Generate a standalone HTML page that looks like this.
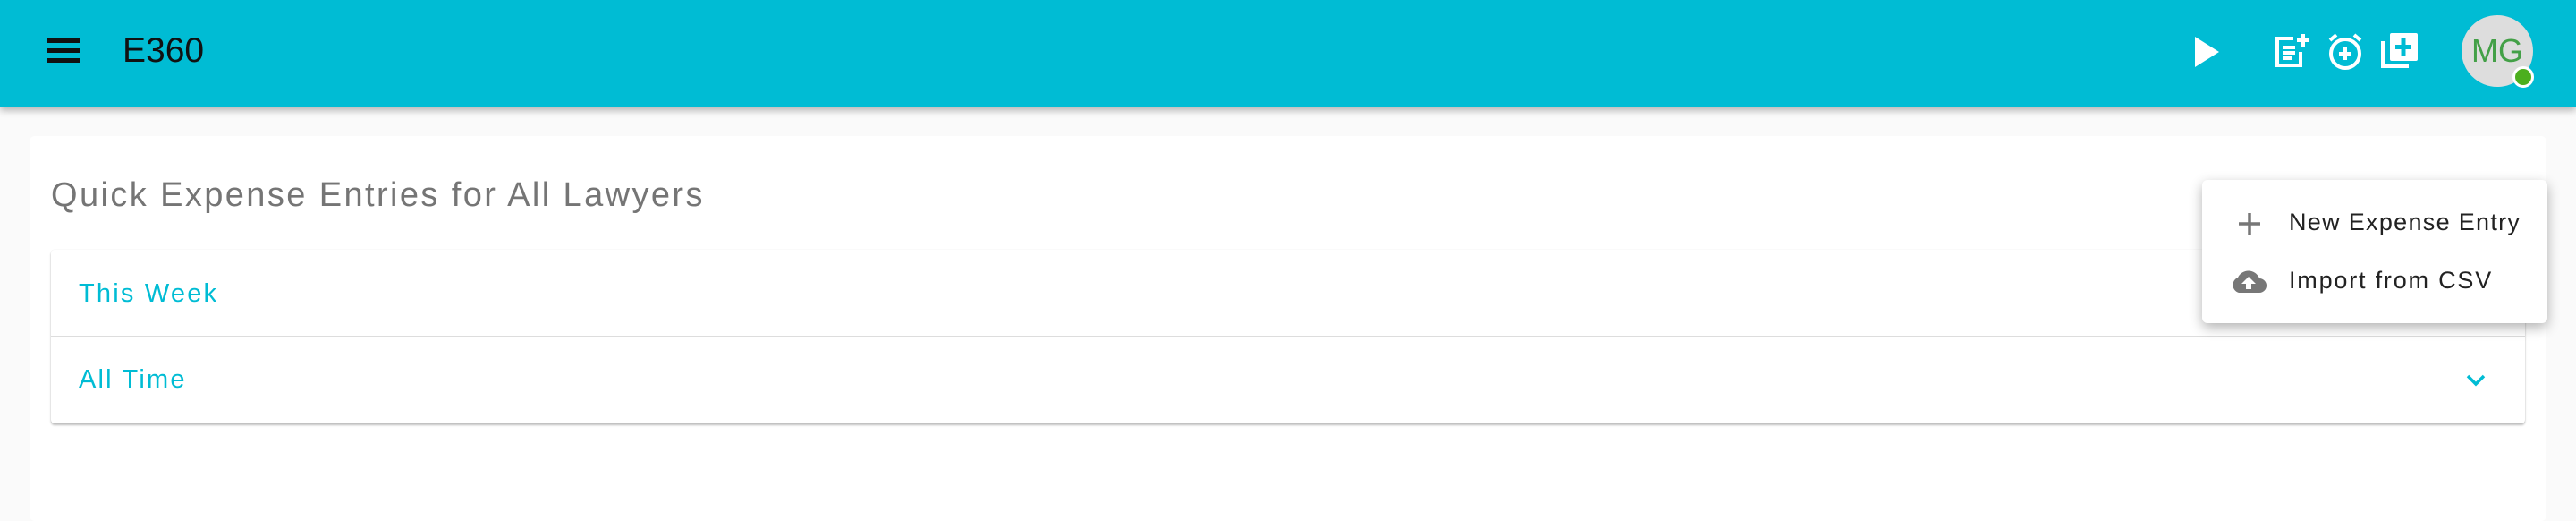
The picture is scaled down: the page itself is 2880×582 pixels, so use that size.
<!DOCTYPE html>
<html><head><style>
*{margin:0;padding:0;box-sizing:border-box}
body{width:2880px;height:575px;background:#fafafa;font-family:"Liberation Sans",sans-serif;position:relative;overflow:hidden}
.hdr{position:absolute;left:0;top:0;width:2880px;height:120px;background:#00bcd4;box-shadow:0 3px 8px rgba(0,0,0,.3);z-index:2}
.abs{position:absolute}
.card{position:absolute;left:33px;top:152px;width:2814px;height:430px;background:#fff;border-radius:6px}
.panel{position:absolute;left:57px;top:279px;width:2766px;height:194px;background:#fff;border-radius:4px;box-shadow:0 2px 2px rgba(0,0,0,.25),0 0 1px rgba(0,0,0,.12)}
.row{position:absolute;left:31px;font-size:29px;color:#00bcd4;letter-spacing:2.2px}
.menu{position:absolute;left:2462px;top:201px;width:386px;height:160px;background:#fff;border-radius:6px;box-shadow:0 5px 14px rgba(0,0,0,.3);z-index:3}
.mi{position:absolute;left:97px;font-size:27px;color:#222;letter-spacing:1.3px}
</style></head><body>
<div class="hdr">
 <svg class="abs" style="left:53px;top:43px" width="36" height="28"><rect x="0" y="0" width="36" height="5" fill="#111"/><rect x="0" y="11" width="36" height="5" fill="#111"/><rect x="0" y="22" width="36" height="5" fill="#111"/></svg>
 <div class="abs" style="left:137px;top:35px;font-size:39px;color:#111">E360</div>
 <svg class="abs" style="left:2453px;top:40px" width="30" height="36"><path d="M1 1 L28 18 L1 35Z" fill="#fff"/></svg>
 <svg class="abs" style="left:2542px;top:36px" width="42" height="42" fill="none" stroke="#fff" stroke-width="4"><path d="M22 7 H4 V37 H30 V22"/><path d="M10 17H24M10 23H24M10 29H20"/><path d="M33 2V16M26 9H40"/></svg>
 <svg class="abs" style="left:2601px;top:36px" width="44" height="44" fill="none" stroke="#fff" stroke-width="4"><circle cx="21" cy="24" r="16"/><path d="M21 17V31M14 24H28"/><path d="M4 9L11 3M38 9L31 3"/></svg>
 <svg class="abs" style="left:2661px;top:36px" width="44" height="42"><path d="M3 10V38H32" fill="none" stroke="#fff" stroke-width="4"/><rect x="11" y="1" width="31" height="31" rx="2" fill="#fff"/><path d="M26 7V26M17 16.5H35" stroke="#00bcd4" stroke-width="5"/></svg>
 <div class="abs" style="left:2752px;top:17px;width:80px;height:80px;border-radius:50%;background:#ddd;color:#43a047;font-size:36px;text-align:center;line-height:80px">MG</div>
 <div class="abs" style="left:2809px;top:74px;width:24px;height:24px;border-radius:50%;background:#4caf1e;border:3px solid #fff"></div>
</div>
<div class="card">
 <div class="abs" style="left:24px;top:45px;font-size:38px;color:#757575;letter-spacing:2.4px">Quick Expense Entries for All Lawyers</div>
</div>
<div class="panel">
 <div class="row" style="top:33px">This Week</div>
 <div class="abs" style="left:0;top:96px;width:100%;height:2px;background:#ddd"></div>
 <div class="row" style="top:129px">All Time</div>
 <svg class="abs" style="left:2699px;top:138px" width="24" height="16"><path d="M3 3L12 12L21 3" fill="none" stroke="#00bcd4" stroke-width="3.5"/></svg>
</div>
<div class="menu">
 <svg class="abs" style="left:40px;top:36px" width="26" height="26"><path d="M13 1V25M1 13H25" stroke="#777" stroke-width="3.5"/></svg>
 <div class="mi" style="top:32px">New Expense Entry</div>
 <svg class="abs" style="left:31px;top:99px" width="42" height="28"><path d="M10 27 A9 9 0 0 1 9 10 A13 13 0 0 1 33 11 A8 8 0 0 1 33 27Z" fill="#777"/><path d="M21 9L13 17H18V23H24V17H29Z" fill="#fff"/></svg>
 <div class="mi" style="top:97px;letter-spacing:1.8px">Import from CSV</div>
</div>
</body></html>
